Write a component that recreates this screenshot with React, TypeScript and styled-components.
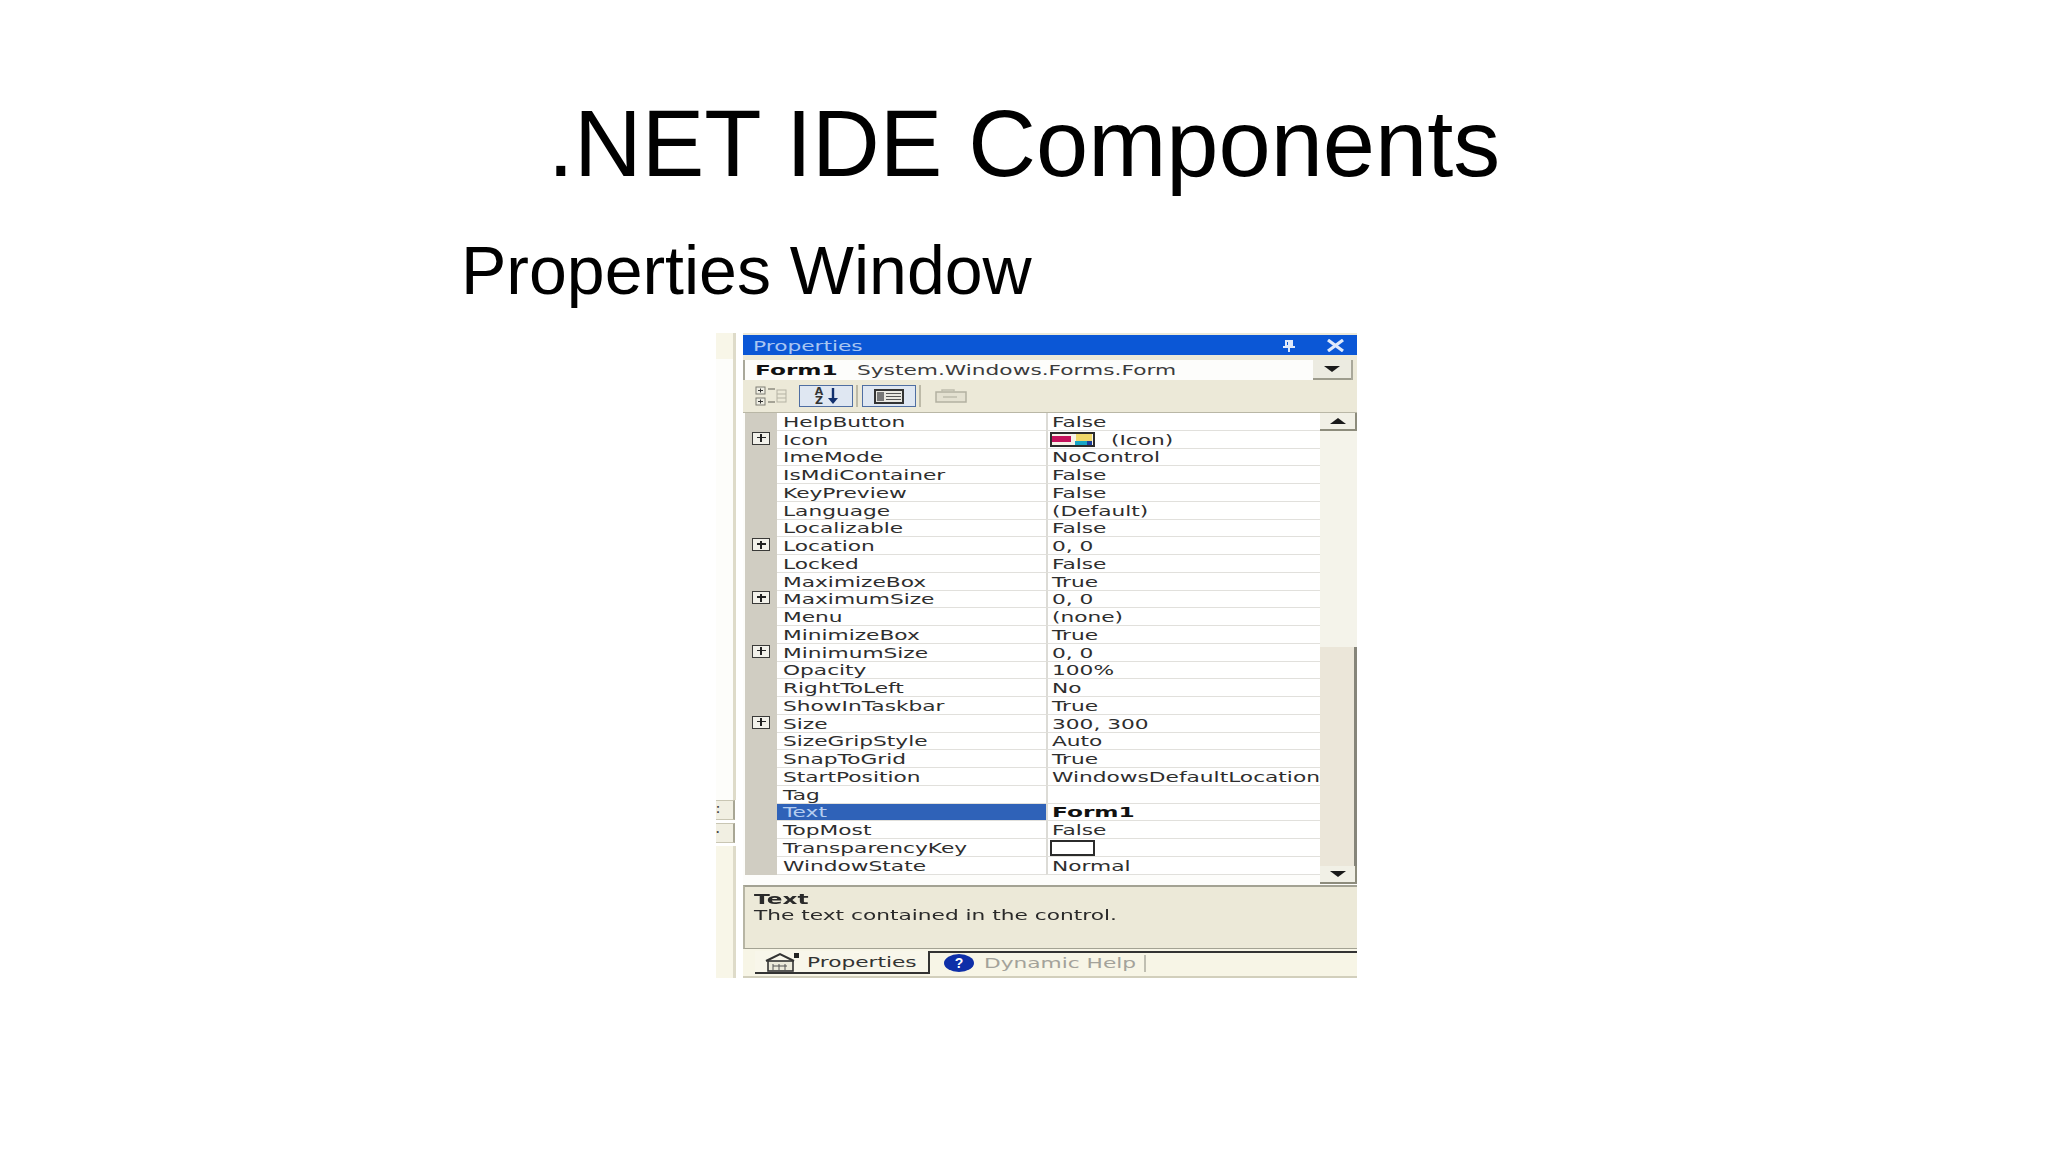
import React from 'react';
import styled, { createGlobalStyle } from 'styled-components';

interface PropRow {
  name: string;
  value: string;
  expandable?: boolean;
  selected?: boolean;
  bold?: boolean;
  swatch?: 'icon' | 'blank';
}

const rows: PropRow[] = [
  { name: 'HelpButton', value: 'False' },
  { name: 'Icon', value: '(Icon)', expandable: true, swatch: 'icon' },
  { name: 'ImeMode', value: 'NoControl' },
  { name: 'IsMdiContainer', value: 'False' },
  { name: 'KeyPreview', value: 'False' },
  { name: 'Language', value: '(Default)' },
  { name: 'Localizable', value: 'False' },
  { name: 'Location', value: '0, 0', expandable: true },
  { name: 'Locked', value: 'False' },
  { name: 'MaximizeBox', value: 'True' },
  { name: 'MaximumSize', value: '0, 0', expandable: true },
  { name: 'Menu', value: '(none)' },
  { name: 'MinimizeBox', value: 'True' },
  { name: 'MinimumSize', value: '0, 0', expandable: true },
  { name: 'Opacity', value: '100%' },
  { name: 'RightToLeft', value: 'No' },
  { name: 'ShowInTaskbar', value: 'True' },
  { name: 'Size', value: '300, 300', expandable: true },
  { name: 'SizeGripStyle', value: 'Auto' },
  { name: 'SnapToGrid', value: 'True' },
  { name: 'StartPosition', value: 'WindowsDefaultLocation' },
  { name: 'Tag', value: '' },
  { name: 'Text', value: 'Form1', selected: true, bold: true },
  { name: 'TopMost', value: 'False' },
  { name: 'TransparencyKey', value: '', swatch: 'blank' },
  { name: 'WindowState', value: 'Normal' },
];

const GlobalStyle = createGlobalStyle`
  html, body {
    margin: 0;
    padding: 0;
    background: #fff;
  }
`;

const Page = styled.div`
  width: 2048px;
  height: 1152px;
  overflow: hidden;
  background: #fff;
  color: #000;
  font-family: 'Liberation Sans', Arial, sans-serif;
  padding-top: 91px;
  box-sizing: border-box;
`;

const Title = styled.h1`
  margin: 0;
  height: 106px;
  line-height: 106px;
  text-align: center;
  font-size: 93.8px;
  font-weight: 400;
  color: #000;
`;

const Subtitle = styled.h2`
  margin: 35px 0 0 461px;
  height: 76px;
  line-height: 76px;
  font-size: 68px;
  font-weight: 400;
  color: #000;
`;

const Window = styled.div`
  margin: 25px 0 0 716px;
  width: 641px;
  height: 645px;
  display: flex;
  filter: blur(0.45px);
`;

const DockStrip = styled.div`
  width: 27px;
  flex: none;
  display: flex;
  flex-direction: column;
  background: #fff;
  box-sizing: border-box;
`;

const DockCream = styled.div<{ $grow?: boolean }>`
  width: 17px;
  height: ${(p) => (p.$grow ? 'auto' : '26px')};
  flex: ${(p) => (p.$grow ? 1 : 'none')};
  background: #f8f6e8;
  border-right: 3px solid #dedbc9;
`;

const DockGap = styled.div`
  height: 441px;
  width: 17px;
  background: #fdfdfa;
  border-right: 3px solid #dedbc9;
`;

const DockTab = styled.div`
  width: 17px;
  height: 18px;
  margin-bottom: 3px;
  background: #f1efe2;
  border: 1px solid #c9c6b3;
  border-left: none;
  border-right: 2px solid #a8a694;
  color: #444;
  font-size: 12px;
  font-weight: 700;
  line-height: 16px;
`;

const Main = styled.div`
  flex: 1;
  display: flex;
  flex-direction: column;
  background: #ece9d8;
  padding-top: 2px;
`;

const TitleBar = styled.div`
  height: 20px;
  background: #0b57d6;
  display: flex;
  align-items: center;
  padding: 1px 12px 0 10px;
  box-sizing: border-box;
  color: #a9c6f2;
`;

const Stretch = styled.span<{ $bold?: boolean }>`
  display: inline-block;
  font-family: 'DejaVu Sans', sans-serif;
  font-size: 14px;
  line-height: 16px;
  white-space: nowrap;
  font-weight: ${(p) => (p.$bold ? 700 : 400)};
  transform: scaleX(${(p) => (p.$bold ? 1.66 : 1.55)});
  transform-origin: left center;
`;

const TitleSpacer = styled.div`
  flex: 1;
`;

const TitleIcons = styled.div`
  display: flex;
  align-items: center;
  gap: 30px;
  color: #dfe9fa;
`;

const ComboRow = styled.div`
  height: 20px;
  margin: 5px 4px 0 0;
  display: flex;
  align-items: center;
  background: #fdfdfb;
  border-left: 2px solid #a9a89a;
  border-right: 2px solid #a9a89a;
  color: #3b3b3b;
`;

const ComboBold = styled.div`
  width: 102px;
  margin-left: 10px;
  color: #111;
`;

const ComboType = styled.div`
  flex: 1;
`;

const DropButton = styled.div`
  width: 38px;
  height: 20px;
  display: flex;
  align-items: center;
  justify-content: center;
  background: #ecebe1;
  border-bottom: 2px solid #9d9c8d;
  box-sizing: border-box;
`;

const Toolbar = styled.div`
  height: 32px;
  display: flex;
  align-items: center;
  padding-left: 12px;
  box-sizing: border-box;
`;

const ToolButton = styled.div<{ $first?: boolean }>`
  width: 54px;
  height: 22px;
  margin-left: ${(p) => (p.$first ? 11 : 4)}px;
  background: #dfe7f2;
  border: 1px solid #4f6ea2;
  box-sizing: border-box;
  display: flex;
  align-items: center;
  justify-content: center;
  gap: 2px;
`;

const ToolSeparator = styled.div`
  width: 2px;
  height: 22px;
  margin-left: 3px;
  background: #bdbaa8;
`;

const DisabledTool = styled.div`
  margin-left: 14px;
  display: flex;
  align-items: center;
`;

const SortGlyph = styled.span`
  font-family: 'DejaVu Sans', sans-serif;
  font-size: 11px;
  line-height: 9px;
  font-weight: 700;
  width: 12px;
  text-align: center;
  color: #333;
`;

const GridArea = styled.div`
  height: 473px;
  display: flex;
  background: #fdfdfb;
  padding-left: 2px;
  border-top: 1px solid #b9b7a6;
  box-sizing: border-box;
`;

const GridColumn = styled.div`
  width: 575px;
  flex: none;
`;

const Row = styled.div`
  height: 17.76px;
  display: grid;
  grid-template-columns: 32px 269px 1fr;
`;

const Gutter = styled.div`
  background: #d0cdc2;
  display: flex;
  align-items: center;
  justify-content: center;
`;

const NameCell = styled.div<{ $selected?: boolean }>`
  background: ${(p) => (p.$selected ? '#2f62b8' : '#fff')};
  color: ${(p) => (p.$selected ? '#b5cdf0' : '#2e2e2e')};
  border-bottom: 1px solid #e1e0dc;
  padding: 1px 0 0 6px;
  display: flex;
  align-items: center;
  box-sizing: border-box;
  overflow: hidden;
`;

const ValueCell = styled.div<{ $bold?: boolean }>`
  background: #fff;
  color: ${(p) => (p.$bold ? '#111' : '#2e2e2e')};
  border-bottom: 1px solid #e1e0dc;
  border-left: 2px solid #dcdbd6;
  padding: 1px 0 0 4px;
  display: flex;
  align-items: center;
  box-sizing: border-box;
  overflow: hidden;
`;

const SwatchFrame = styled.svg`
  flex: none;
  margin: 0 16px 0 -2px;
`;

const ExpandBox = styled.div`
  width: 16px;
  height: 11px;
  margin-top: -3px;
  border: 1.5px solid #3a3a38;
  background: #f2f1ea;
  position: relative;
  &::before {
    content: '';
    position: absolute;
    left: 3.5px;
    right: 3.5px;
    top: 4px;
    height: 1.5px;
    background: #222;
  }
  &::after {
    content: '';
    position: absolute;
    top: 1.5px;
    bottom: 1.5px;
    left: 7px;
    width: 1.5px;
    background: #222;
  }
`;

const Scrollbar = styled.div`
  flex: 1;
  display: flex;
  flex-direction: column;
  padding-bottom: 1px;
`;

const ScrollButton = styled.div`
  height: 18px;
  flex: none;
  background: #f1f0e6;
  border-right: 2px solid #8d8c7c;
  border-bottom: 2px solid #8d8c7c;
  display: flex;
  align-items: center;
  justify-content: center;
  box-sizing: border-box;
`;

const ScrollLight = styled.div`
  height: 216px;
  flex: none;
  background: #f4f3ea;
`;

const ScrollThumb = styled.div`
  flex: 1;
  background: #ebe6d9;
  border-right: 3px solid #86857a;
`;

const DescriptionPanel = styled.div`
  height: 64px;
  border-top: 2px solid #a3a293;
  border-left: 2px solid #b7b5a4;
  border-bottom: 1px solid #a3a293;
  padding: 4px 0 0 9px;
  box-sizing: border-box;
  color: #2a2a2a;
  display: flex;
  flex-direction: column;
`;

const TabStrip = styled.div`
  flex: 1;
  display: flex;
  align-items: flex-start;
  background: #f7f5e6;
  border-bottom: 2px solid #d2cfbc;
  padding-top: 2px;
`;

const ActiveTab = styled.div`
  width: 175px;
  height: 23px;
  margin-left: 12px;
  flex: none;
  display: flex;
  align-items: center;
  padding: 1px 0 0 8px;
  gap: 4px;
  box-sizing: border-box;
  border-right: 2px solid #333;
  border-bottom: 2px solid #333;
  background: #f8f6ea;
  color: #333;
`;

const IdleArea = styled.div`
  flex: 1;
  height: 23px;
  display: flex;
  align-items: center;
  padding: 0 0 1px 14px;
  gap: 10px;
  border-top: 2px solid #333;
  box-sizing: border-box;
  color: #a3a29a;
`;

const HelpBadge = styled.div`
  width: 30px;
  height: 18px;
  border-radius: 50%;
  background: #0e2fa8;
  color: #fff;
  font-size: 14px;
  font-weight: 700;
  line-height: 18px;
  text-align: center;
  flex: none;
`;

const IdleText = styled.div`
  width: 150px;
`;

const IdleDivider = styled.div`
  width: 2px;
  height: 17px;
  background: #c0bfb2;
`;

const Arrow = ({ up, width = 16 }: { up?: boolean; width?: number }) => (
  <svg width={width} height="6" viewBox="0 0 16 6">
    <path d={up ? 'M8 0 L16 6 L0 6 Z' : 'M0 0 L16 0 L8 6 Z'} fill="#1a1a1a" />
  </svg>
);

const PinIcon = () => (
  <svg width="14" height="13" viewBox="0 0 14 13">
    <path d="M3 1h8v6H3z M1 7h12v2H1z M6 9h2v4H6z M5 3h1v3H5z" fill="currentColor" fillRule="evenodd" />
  </svg>
);

const CloseIcon = () => (
  <svg width="19" height="13" viewBox="0 0 19 13">
    <path d="M2 1l15 11M17 1L2 12" stroke="currentColor" strokeWidth="3.2" fill="none" />
  </svg>
);

const CategoryIcon = () => (
  <svg width="33" height="22" viewBox="0 0 33 22">
    <rect x="1" y="2" width="9" height="7" fill="#efeee4" stroke="#7d7c72" />
    <rect x="1" y="13" width="9" height="7" fill="#efeee4" stroke="#7d7c72" />
    <path d="M3 5.500h5M5.500 3.500v4M3 16.500h5M5.500 14.500v4" stroke="#333" />
    <path d="M13 4h7M13 17h7" stroke="#8d8c80" strokeWidth="1.5" />
    <rect x="22" y="5" width="9" height="12" fill="none" stroke="#b5b3a4" />
    <path d="M22 9h9M22 13h9" stroke="#b5b3a4" />
  </svg>
);

const DownArrowIcon = () => (
  <svg width="12" height="18" viewBox="0 0 12 18">
    <path d="M6 1v12" stroke="#12306e" strokeWidth="2.4" />
    <path d="M1 11h10l-5 6z" fill="#12306e" />
  </svg>
);

const PanelIcon = () => (
  <svg width="30" height="15" viewBox="0 0 30 15">
    <rect x="1" y="1" width="28" height="13" fill="#e9e8e2" stroke="#333" strokeWidth="2" />
    <rect x="3" y="3" width="7" height="9" fill="#777" />
    <path d="M12 4.500h15M12 7.500h15M12 10.500h15" stroke="#555" />
  </svg>
);

const PagesIcon = () => (
  <svg width="32" height="14" viewBox="0 0 32 14">
    <rect x="1" y="3" width="30" height="10" fill="#e4e1d1" stroke="#b3b1a1" strokeWidth="1.5" />
    <path d="M7 3V1h12v2M8 8h14" stroke="#bfbdad" strokeWidth="1.5" fill="none" />
  </svg>
);

const PropertyPageIcon = () => (
  <svg width="40" height="20" viewBox="0 0 40 20">
    <path d="M3 9 L17 2 L31 9" fill="none" stroke="#333" strokeWidth="2" />
    <rect x="5" y="9" width="25" height="10" fill="#eceadb" stroke="#333" strokeWidth="1.6" />
    <path d="M10 12v7M16 12v7M22 12v7M10 14h14" stroke="#555" />
    <rect x="31" y="1" width="5" height="5" fill="#222" />
  </svg>
);

const Swatch = ({ kind }: { kind: 'icon' | 'blank' }) =>
  kind === 'icon' ? (
    <SwatchFrame width="45" height="15" viewBox="0 0 45 15">
      <rect x="1" y="1" width="43" height="13" fill="#f6f3e8" stroke="#2b2b2b" strokeWidth="2" />
      <rect x="2" y="4" width="19" height="6" fill="#c4125c" />
      <rect x="26" y="2" width="16" height="7" fill="#efd76a" />
      <rect x="25" y="9" width="12" height="4" fill="#18a6c6" />
      <rect x="37" y="9" width="5" height="4" fill="#1c3f9c" />
    </SwatchFrame>
  ) : (
    <SwatchFrame width="45" height="16" viewBox="0 0 45 16">
      <rect x="1" y="1" width="43" height="14" fill="#fff" stroke="#2b2b2b" strokeWidth="2" />
    </SwatchFrame>
  );

const App: React.FC = () => {
  return (
    <Page>
      <GlobalStyle />
      <Title>.NET IDE Components</Title>
      <Subtitle>Properties Window</Subtitle>
      <Window>
        <DockStrip>
          <DockCream />
          <DockGap />
          <DockTab>:</DockTab>
          <DockTab>·</DockTab>
          <DockCream $grow />
        </DockStrip>
        <Main>
          <TitleBar>
            <Stretch>Properties</Stretch>
            <TitleSpacer />
            <TitleIcons>
              <PinIcon />
              <CloseIcon />
            </TitleIcons>
          </TitleBar>
          <ComboRow>
            <ComboBold>
              <Stretch $bold>Form1</Stretch>
            </ComboBold>
            <ComboType>
              <Stretch>System.Windows.Forms.Form</Stretch>
            </ComboType>
            <DropButton>
              <Arrow />
            </DropButton>
          </ComboRow>
          <Toolbar>
            <CategoryIcon />
            <ToolButton $first>
              <SortGlyph>
                A
                <br />Z
              </SortGlyph>
              <DownArrowIcon />
            </ToolButton>
            <ToolSeparator />
            <ToolButton>
              <PanelIcon />
            </ToolButton>
            <ToolSeparator />
            <DisabledTool>
              <PagesIcon />
            </DisabledTool>
          </Toolbar>
          <GridArea>
            <GridColumn>
              {rows.map((row) => (
                <Row key={row.name}>
                  <Gutter>{row.expandable && <ExpandBox />}</Gutter>
                  <NameCell $selected={row.selected}>
                    <Stretch>{row.name}</Stretch>
                  </NameCell>
                  <ValueCell $bold={row.bold}>
                    {row.swatch && <Swatch kind={row.swatch} />}
                    <Stretch $bold={row.bold}>{row.value}</Stretch>
                  </ValueCell>
                </Row>
              ))}
            </GridColumn>
            <Scrollbar>
              <ScrollButton>
                <Arrow up />
              </ScrollButton>
              <ScrollLight />
              <ScrollThumb />
              <ScrollButton>
                <Arrow />
              </ScrollButton>
            </Scrollbar>
          </GridArea>
          <DescriptionPanel>
            <Stretch $bold>Text</Stretch>
            <Stretch>The text contained in the control.</Stretch>
          </DescriptionPanel>
          <TabStrip>
            <ActiveTab>
              <PropertyPageIcon />
              <Stretch>Properties</Stretch>
            </ActiveTab>
            <IdleArea>
              <HelpBadge>?</HelpBadge>
              <IdleText>
                <Stretch>Dynamic Help</Stretch>
              </IdleText>
              <IdleDivider />
            </IdleArea>
          </TabStrip>
        </Main>
      </Window>
    </Page>
  );
};

export default App;
